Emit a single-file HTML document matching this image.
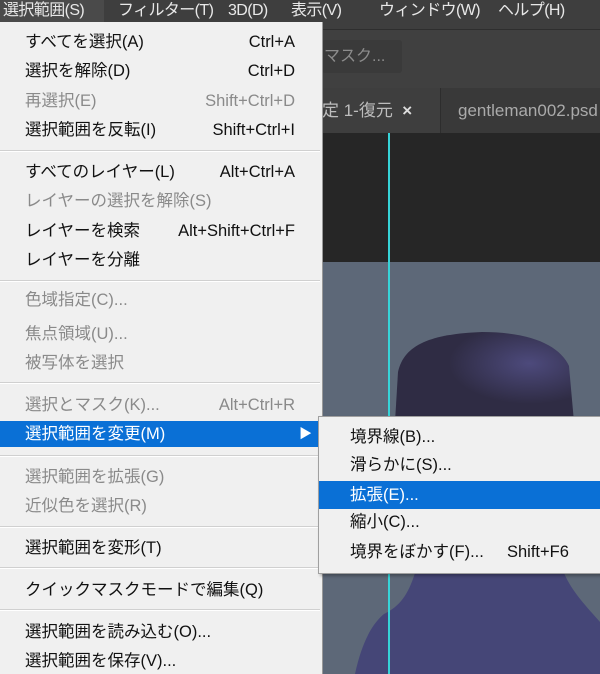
<!DOCTYPE html>
<html><head><meta charset="utf-8"><style>
*{margin:0;padding:0;box-sizing:border-box}
body{width:600px;height:674px;overflow:hidden;position:relative;background:#5d6878;font-family:"Liberation Sans","Noto Sans CJK JP",sans-serif}
.a{position:absolute}
.mb{left:0;top:0;width:600px;height:29px;background:#3e3e3e;color:#e8e8e8;font-size:16px;letter-spacing:-0.6px}
.mb span{position:absolute;top:0;line-height:22px;white-space:nowrap}
.menu{left:0;top:22px;width:323px;height:652px;background:#f0f0f0;border-right:1px solid #999}
.it{position:absolute;left:0;width:318px;height:26px;font-size:16.5px;color:#111;line-height:26px}
.it .l{position:absolute;left:25px}
.it .r{position:absolute;right:23px}
.d{color:#8a8a8a}
.sep{position:absolute;left:0;width:320px;height:2px;background:#d0d0d0;border-bottom:1px solid #fff}
.hl{background:#0a70d6;color:#fff}
.sub{left:318px;top:416px;width:290px;height:158px;background:#f0f0f0;border:1px solid #a0a0a0;box-shadow:2px 2px 3px rgba(0,0,0,.3)}
.sub .it{width:290px;left:0}
.sub .it .l{left:31px}
.sub .it .r{left:188px;right:auto}
</style></head><body>
<div class="a" style="left:0;top:29px;width:600px;height:59px;background:#404040;border-top:1px solid #2e2e2e"></div>
<div class="a" style="left:322px;top:40px;width:80px;height:33px;background:#3a3a3a;border-radius:3px;color:#8c8c8c;font-size:16px;line-height:33px;padding-left:2px">マスク...</div>
<div class="a" style="left:0;top:88px;width:600px;height:45px;background:#393939"></div>
<div class="a" style="left:322px;top:88px;width:119px;height:45px;background:#3e3e3e;border-right:1px solid #2d2d2d;color:#bdbdbd;font-size:17px;line-height:45px">定 1-復元 &nbsp;<b style="color:#ddd">×</b></div>
<div class="a" style="left:458px;top:88px;color:#aaa;font-size:17px;line-height:45px;white-space:nowrap">gentleman002.psd</div>
<div class="a" style="left:322px;top:133px;width:278px;height:129px;background:#262626"></div>
<svg class="a" style="left:322px;top:262px" width="278" height="412">
<defs><radialGradient id="g" cx="0.75" cy="0.35" r="0.45"><stop offset="0" stop-color="#4d4a7c"/><stop offset="1" stop-color="#2f2c44"/></radialGradient></defs>
<path d="M73 160 L76 110 C82 82 110 72 160 70 C210 70 238 84 247 104 L252 160 Z" fill="url(#g)"/>
<path d="M93 311 L242 311 C250 330 265 345 278 360 L278 412 L33 412 C40 380 50 362 62 352 C78 344 86 333 93 311 Z" fill="#454677"/>
</svg>
<div class="a" style="left:388px;top:133px;width:2px;height:541px;background:#36d3d8"></div>
<div class="a mb"><span style="left:0;padding:0 3px;background:#4a4a4a;width:104px;height:22px">選択範囲(S)</span><span style="left:118px">フィルター(T)</span><span style="left:228px">3D(D)</span><span style="left:291px">表示(V)</span><span style="left:379px">ウィンドウ(W)</span><span style="left:498px">ヘルプ(H)</span></div>
<div class="a menu">
<div class="it" style="top:7px"><span class="l">すべてを選択(A)</span><span class="r">Ctrl+A</span></div>
<div class="it" style="top:36px"><span class="l">選択を解除(D)</span><span class="r">Ctrl+D</span></div>
<div class="it d" style="top:66px"><span class="l">再選択(E)</span><span class="r">Shift+Ctrl+D</span></div>
<div class="it" style="top:95px"><span class="l">選択範囲を反転(I)</span><span class="r">Shift+Ctrl+I</span></div>
<div class="sep" style="top:128px"></div>
<div class="it" style="top:137px"><span class="l">すべてのレイヤー(L)</span><span class="r">Alt+Ctrl+A</span></div>
<div class="it d" style="top:166px"><span class="l">レイヤーの選択を解除(S)</span></div>
<div class="it" style="top:196px"><span class="l">レイヤーを検索</span><span class="r">Alt+Shift+Ctrl+F</span></div>
<div class="it" style="top:225px"><span class="l">レイヤーを分離</span></div>
<div class="sep" style="top:258px"></div>
<div class="it d" style="top:265px"><span class="l">色域指定(C)...</span></div>
<div class="it d" style="top:299px"><span class="l">焦点領域(U)...</span></div>
<div class="it d" style="top:328px"><span class="l">被写体を選択</span></div>
<div class="sep" style="top:360px"></div>
<div class="it d" style="top:370px"><span class="l">選択とマスク(K)...</span><span class="r">Alt+Ctrl+R</span></div>
<div class="it hl" style="top:399px"><span class="l">選択範囲を変更(M)</span><span class="r" style="right:6px;font-size:13px">▶</span></div>
<div class="sep" style="top:433px"></div>
<div class="it d" style="top:442px"><span class="l">選択範囲を拡張(G)</span></div>
<div class="it d" style="top:471px"><span class="l">近似色を選択(R)</span></div>
<div class="sep" style="top:504px"></div>
<div class="it" style="top:513px"><span class="l">選択範囲を変形(T)</span></div>
<div class="sep" style="top:545px"></div>
<div class="it" style="top:555px"><span class="l">クイックマスクモードで編集(Q)</span></div>
<div class="sep" style="top:587px"></div>
<div class="it" style="top:597px"><span class="l">選択範囲を読み込む(O)...</span></div>
<div class="it" style="top:626px"><span class="l">選択範囲を保存(V)...</span></div>
</div>
<div class="a sub">
<div class="it" style="top:7px"><span class="l">境界線(B)...</span></div>
<div class="it" style="top:35px"><span class="l">滑らかに(S)...</span></div>
<div class="it hl" style="top:64px;height:28px;line-height:28px"><span class="l">拡張(E)...</span></div>
<div class="it" style="top:92px"><span class="l">縮小(C)...</span></div>
<div class="it" style="top:122px"><span class="l">境界をぼかす(F)...</span><span class="r">Shift+F6</span></div>
</div>
</body></html>
